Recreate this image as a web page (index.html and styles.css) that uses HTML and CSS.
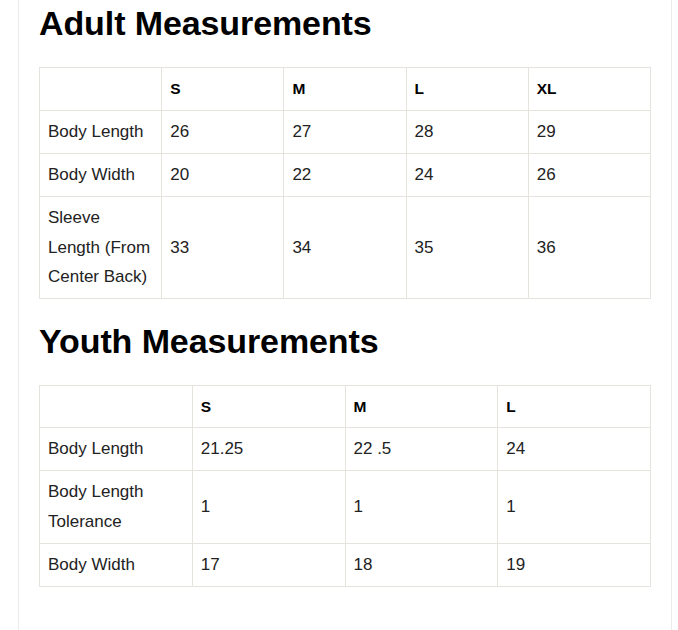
FILE: index.html
```html
<!DOCTYPE html>
<html>
<head>
<meta charset="utf-8">
<link rel="stylesheet" href="styles.css">
</head>
<body>
<div class="page">
  <div class="panel">
    <h2 class="title">Adult Measurements</h2>
    <table class="sizes">
      <tr class="head"><td></td><td>S</td><td>M</td><td>L</td><td>XL</td></tr>
      <tr><td>Body Length</td><td>26</td><td>27</td><td>28</td><td>29</td></tr>
      <tr><td>Body Width</td><td>20</td><td>22</td><td>24</td><td>26</td></tr>
      <tr><td>Sleeve Length (From Center Back)</td><td>33</td><td>34</td><td>35</td><td>36</td></tr>
    </table>
    <h2 class="title">Youth Measurements</h2>
    <table class="sizes youth">
      <tr class="head"><td></td><td>S</td><td>M</td><td>L</td></tr>
      <tr><td>Body Length</td><td>21.25</td><td>22 .5</td><td>24</td></tr>
      <tr><td>Body Length Tolerance</td><td>1</td><td>1</td><td>1</td></tr>
      <tr><td>Body Width</td><td>17</td><td>18</td><td>19</td></tr>
    </table>
  </div>
</div>
</body>
</html>
```
FILE: styles.css
```css
html, body {
  margin: 0;
  padding: 0;
  background: #fff;
}
body {
  font-family: "Liberation Sans", Arial, sans-serif;
  color: #222;
}
.page {
  padding-left: 18px;
}
.panel {
  width: 612px;
  min-height: 640px;
  padding: 4px 20px 0 20px;
  border-left: 1px solid #ebebeb;
  border-right: 1px solid #ebebeb;
}
.title {
  margin: 0 0 24px 0;
  font-size: 34px;
  font-weight: bold;
  line-height: 39px;
  color: #000;
  letter-spacing: -0.1px;
}
.sizes {
  width: 612px;
  table-layout: fixed;
  border-collapse: collapse;
  margin-bottom: 23px;
  font-size: 17px;
}
.sizes td {
  border: 1px solid #e6e3de;
  padding: 6.25px 8px;
  line-height: 29.5px;
  vertical-align: middle;
  text-align: left;
}
.sizes .head td {
  font-weight: bold;
  font-size: 15.5px;
  color: #000;
}
.youth .head td {
  padding-top: 5.75px;
  padding-bottom: 5.75px;
}
```
